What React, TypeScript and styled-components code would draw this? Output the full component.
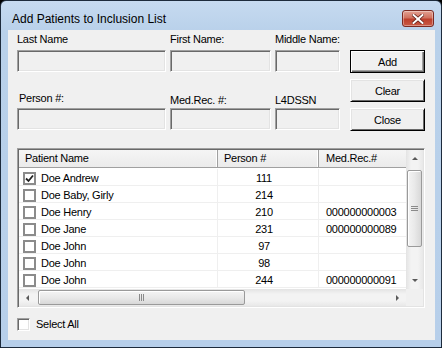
import styled, { createGlobalStyle } from "styled-components";

const GlobalStyle = createGlobalStyle`
  html, body {
    margin: 0;
    padding: 0;
    background: #000;
  }
  body {
    font-family: "Liberation Sans", Arial, sans-serif;
    font-size: 11px;
    letter-spacing: -0.25px;
    color: #000;
  }
`;

const Window = styled.div`
  box-sizing: border-box;
  width: 442px;
  height: 348px;
  border: 1px solid #1d2b3c;
  border-radius: 6px 6px 0 0;
  background: linear-gradient(#c6daf0, #b9d1ea 30px, #b7cfea);
  padding: 0 6px 7px 7px;
  display: flex;
  flex-direction: column;
`;

const TitleBar = styled.div`
  height: 29px;
  display: flex;
  align-items: flex-start;
  justify-content: space-between;
`;

const Title = styled.span`
  font-size: 12px;
  letter-spacing: 0;
  line-height: 14px;
  margin: 11px 0 0 4px;
  color: #000;
`;

const CloseBtn = styled.div`
  box-sizing: border-box;
  width: 32px;
  height: 17px;
  margin-top: 9px;
  margin-right: 1px;
  border: 1px solid #7c2a22;
  border-radius: 3px;
  background: linear-gradient(#e3a193, #d0715f 45%, #bd3f2c 55%, #c95a45);
  box-shadow: inset 0 0 0 1px rgba(255, 255, 255, 0.35);
  display: flex;
  align-items: center;
  justify-content: center;
`;

const Content = styled.div`
  flex: 1;
  background: #f0f0f0;
  padding: 0 0 0 9px;
  display: flex;
  flex-direction: column;
`;

const FormRow = styled.div`
  display: flex;
`;

const Fields = styled.div`
  display: grid;
  grid-template-columns: 149px 101px 65px;
  grid-template-rows: 20px 22px 36px 22px;
  column-gap: 4px;
`;

const Label = styled.label<{ $pb: number }>`
  align-self: end;
  line-height: 13px;
  padding-bottom: ${(p) => p.$pb}px;
  padding-left: ${(p) => (p.$pb === 3 ? 2 : 0)}px;
  white-space: nowrap;
`;

const Field = styled.div`
  box-sizing: border-box;
  height: 22px;
  background: #f0f0f0;
  border-style: solid;
  border-width: 1px;
  border-color: #a0a0a0 #fff #fff #a0a0a0;
  box-shadow: inset 1px 1px #696969, inset -1px -1px #e3e3e3;
`;

const Buttons = styled.div`
  display: flex;
  flex-direction: column;
  gap: 6px;
  margin-left: 10px;
  padding-top: 20px;
`;

const Button = styled.div<{ $default?: boolean }>`
  box-sizing: border-box;
  width: 75px;
  height: 23px;
  display: flex;
  align-items: center;
  justify-content: center;
  background: #f0f0f0;
  border: 1px solid ${(p) => (p.$default ? "#000" : "#fff")};
  border-right-color: #000;
  border-bottom-color: #000;
  box-shadow: ${(p) =>
    p.$default
      ? "inset 1px 1px #fff, inset -1px -1px #696969, inset -2px -2px #a0a0a0"
      : "inset 1px 1px #e3e3e3, inset -1px -1px #696969"};
  padding-top: 1px;
`;

const ListBox = styled.div`
  box-sizing: border-box;
  margin-top: 17px;
  width: 408px;
  height: 160px;
  border-style: solid;
  border-width: 1px;
  border-color: #a0a0a0 #fff #fff #a0a0a0;
  box-shadow: inset 1px 1px #696969, inset -1px -1px #e3e3e3;
  padding: 1px;
  display: grid;
  grid-template-columns: 387px 17px;
  grid-template-rows: 139px 17px;
  background: #fff;
`;

const ListView = styled.div`
  overflow: hidden;
  background: #fff;
`;

const HeaderRow = styled.div`
  display: flex;
  height: 17px;
  border-bottom: 1px solid #a0a0a0;
  background: linear-gradient(#f5f5f5, #ebebeb);
  margin-bottom: 1px;
`;

const HeaderCell = styled.div<{ $w: number; $pad: number }>`
  box-sizing: border-box;
  flex: 0 0 ${(p) => p.$w}px;
  padding-left: ${(p) => p.$pad}px;
  line-height: 17px;
  border-right: 1px solid #a0a0a0;
  box-shadow: inset -1px 0 #fff;
  white-space: nowrap;
`;

const Row = styled.div`
  display: flex;
  height: 17px;
  box-sizing: border-box;
  border-bottom: 1px solid #efefef;
`;

const Cell = styled.div<{ $w: number; $align?: "left" | "center" }>`
  box-sizing: border-box;
  flex: 0 0 ${(p) => p.$w}px;
  display: flex;
  align-items: flex-start;
  justify-content: ${(p) => (p.$align === "center" ? "center" : "flex-start")};
  padding: 3px ${(p) => (p.$align === "center" ? 8 : 0)}px 0
    ${(p) => (p.$align === "center" ? 0 : 7)}px;
  border-right: 1px solid #efefef;
  line-height: 13px;
  white-space: nowrap;
`;

const NameCell = styled(Cell)`
  padding-left: 4px;
  gap: 5px;
`;

const ItemCheck = styled.span`
  box-sizing: border-box;
  flex: 0 0 13px;
  width: 13px;
  height: 13px;
  border: 2px solid #8b8b8b;
  background: #fff;
  display: flex;
  align-items: center;
  justify-content: center;
`;

const VScroll = styled.div`
  display: flex;
  flex-direction: column;
  background: linear-gradient(90deg, #e3e3e3, #f3f3f3 30%, #f3f3f3 70%, #e8e8e8);
`;

const HScroll = styled.div`
  display: flex;
  align-items: center;
  background: linear-gradient(#e3e3e3, #f3f3f3 30%, #f3f3f3 70%, #e8e8e8);
`;

const ArrowBox = styled.div`
  flex: 0 0 17px;
  width: 17px;
  height: 17px;
  display: flex;
  align-items: center;
  justify-content: center;
`;

const VThumb = styled.div`
  box-sizing: border-box;
  margin: 3px 1px 0 1px;
  height: 77px;
  border: 1px solid #9a9a9a;
  border-radius: 2px;
  background: linear-gradient(90deg, #f4f4f4, #e9e9e9 50%, #d8d8d8);
  box-shadow: inset 1px 1px #fff;
  display: flex;
  align-items: center;
  justify-content: center;
`;

const HThumb = styled.div`
  box-sizing: border-box;
  margin-left: 2px;
  width: 207px;
  height: 15px;
  border: 1px solid #9a9a9a;
  border-radius: 2px;
  background: linear-gradient(#f4f4f4, #e9e9e9 50%, #d8d8d8);
  box-shadow: inset 1px 1px #fff;
  display: flex;
  align-items: center;
  justify-content: center;
`;

const Spacer = styled.div`
  flex: 1;
`;

const Corner = styled.div`
  background: #f0f0f0;
`;

const SelectAllRow = styled.div`
  display: flex;
  align-items: center;
  gap: 6px;
  margin-top: 10px;
  line-height: 13px;
`;

const ClassicCheck = styled.span`
  box-sizing: border-box;
  width: 13px;
  height: 13px;
  background: #fff;
  border-style: solid;
  border-width: 1px;
  border-color: #a0a0a0 #fff #fff #a0a0a0;
  box-shadow: inset 1px 1px #696969, inset -1px -1px #e3e3e3;
`;

const Arrow = ({ dir }: { dir: "up" | "down" | "left" | "right" }) => {
  const pts = {
    up: "1,5 4,2 7,5",
    down: "1,2 4,5 7,2",
    left: "5,1 2,4 5,7",
    right: "2,1 5,4 2,7",
  }[dir];
  return (
    <svg width="7" height="7" viewBox="0 0 7 7">
      <polygon points={pts} fill="#5a5a5a" />
    </svg>
  );
};

const patients = [
  { name: "Doe Andrew", person: "111", mrn: "", checked: true },
  { name: "Doe Baby, Girly", person: "214", mrn: "" },
  { name: "Doe Henry", person: "210", mrn: "000000000003" },
  { name: "Doe Jane", person: "231", mrn: "000000000089" },
  { name: "Doe John", person: "97", mrn: "" },
  { name: "Doe John", person: "98", mrn: "" },
  { name: "Doe John", person: "244", mrn: "000000000091" },
];

export default function App() {
  return (
    <>
      <GlobalStyle />
      <Window>
        <TitleBar>
          <Title>Add Patients to Inclusion List</Title>
          <CloseBtn>
            <svg width="12" height="10" viewBox="0 0 12 10">
              <path
                d="M1.5 1 L10.5 9 M10.5 1 L1.5 9"
                stroke="#5a1a14"
                strokeWidth="3.4"
                strokeLinecap="square"
              />
              <path
                d="M1.5 1 L10.5 9 M10.5 1 L1.5 9"
                stroke="#fff"
                strokeWidth="2"
                strokeLinecap="square"
              />
            </svg>
          </CloseBtn>
        </TitleBar>
        <Content>
          <FormRow>
            <Fields>
              <Label $pb={4}>Last Name</Label>
              <Label $pb={4}>First Name:</Label>
              <Label $pb={4}>Middle Name:</Label>
              <Field />
              <Field />
              <Field />
              <Label $pb={3}>Person #:</Label>
              <Label $pb={1}>Med.Rec. #:</Label>
              <Label $pb={1}>L4DSSN</Label>
              <Field />
              <Field />
              <Field />
            </Fields>
            <Buttons>
              <Button $default>Add</Button>
              <Button>Clear</Button>
              <Button>Close</Button>
            </Buttons>
          </FormRow>

          <ListBox>
            <ListView>
              <HeaderRow>
                <HeaderCell $w={199} $pad={6}>
                  Patient Name
                </HeaderCell>
                <HeaderCell $w={101} $pad={6}>
                  Person #
                </HeaderCell>
                <HeaderCell $w={110} $pad={7}>
                  Med.Rec.#
                </HeaderCell>
              </HeaderRow>
              {patients.map((p, i) => (
                <Row key={i}>
                  <NameCell $w={199}>
                    <ItemCheck>
                      {p.checked && (
                        <svg width="9" height="9" viewBox="0 0 9 9">
                          <path
                            d="M1 4.5 L3.5 7 L8 1.5"
                            stroke="#222"
                            strokeWidth="1.8"
                            fill="none"
                          />
                        </svg>
                      )}
                    </ItemCheck>
                    {p.name}
                  </NameCell>
                  <Cell $w={101} $align="center">
                    {p.person}
                  </Cell>
                  <Cell $w={110}>{p.mrn}</Cell>
                </Row>
              ))}
            </ListView>
            <VScroll>
              <ArrowBox>
                <Arrow dir="up" />
              </ArrowBox>
              <VThumb>
                <svg width="7" height="6" viewBox="0 0 7 6">
                  <path d="M0 0.5 H7 M0 2.5 H7 M0 4.5 H7" stroke="#8a8a8a" />
                </svg>
              </VThumb>
              <Spacer />
              <ArrowBox>
                <Arrow dir="down" />
              </ArrowBox>
            </VScroll>
            <HScroll>
              <ArrowBox>
                <Arrow dir="left" />
              </ArrowBox>
              <HThumb>
                <svg width="6" height="7" viewBox="0 0 6 7">
                  <path d="M0.5 0 V7 M2.5 0 V7 M4.5 0 V7" stroke="#8a8a8a" />
                </svg>
              </HThumb>
              <Spacer />
              <ArrowBox>
                <Arrow dir="right" />
              </ArrowBox>
            </HScroll>
            <Corner />
          </ListBox>

          <SelectAllRow>
            <ClassicCheck />
            Select All
          </SelectAllRow>
        </Content>
      </Window>
    </>
  );
}
